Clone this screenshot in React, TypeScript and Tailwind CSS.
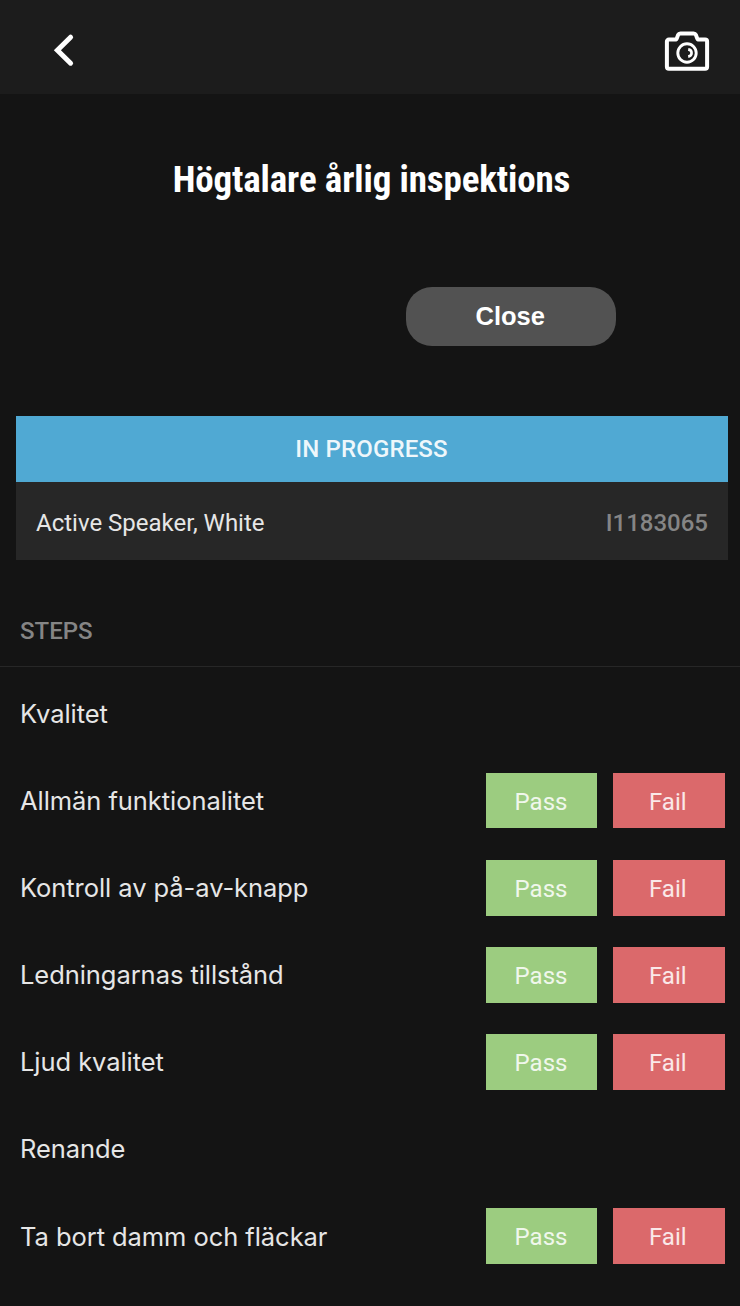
import React from 'react'

const steps = [
    { name: 'Kvalitet', heading: true },
    { name: 'Allmän funktionalitet', heading: false },
    { name: 'Kontroll av på-av-knapp', heading: false },
    { name: 'Ledningarnas tillstånd', heading: false },
    { name: 'Ljud kvalitet', heading: false },
    { name: 'Renande', heading: true },
    { name: 'Ta bort damm och fläckar', heading: false },
]

function Header() {
    return (
        <header className="flex h-[94px] items-center justify-between bg-[#1c1c1c] pt-[8px] pr-[28px] pl-[50px]">
            <button className="cursor-pointer">
                <svg width="28" height="36" viewBox="0 0 28 36" fill="none" stroke="#fff" strokeWidth="5" strokeLinecap="round" strokeLinejoin="miter">
                    <path d="M20.6 4.2 7.4 17.2 20.6 30.2" />
                </svg>
            </button>
            <button className="cursor-pointer pt-[2px]">
                <svg width="50" height="44" viewBox="0 0 50 44" fill="none" stroke="#fff" strokeWidth="4" strokeLinejoin="round">
                    <path d="M6.9 9.6H13q1.4 0 1.9-1.5l1.2-3.2q.7-1.5 2.3-1.5h13.2q1.6 0 2.3 1.5l1.2 3.2q.5 1.5 1.9 1.5h6.1a2 2 0 0 1 2 2v25.2a2 2 0 0 1-2 2H6.9a2 2 0 0 1-2-2V11.6a2 2 0 0 1 2-2Z" />
                    <circle cx="25" cy="23" r="9.2" strokeWidth="2.9" />
                    <path d="M26.2 19.4q3.4.6 3.4 3.6t-3.4 3.6" strokeWidth="2.6" />
                </svg>
            </button>
        </header>
    )
}

function StepRow({ name, heading }: { name: string; heading: boolean }) {
    return (
        <li className="flex h-[87.15px] items-center justify-between pr-[15.5px] pl-5">
            <span className="pt-px font-[Inter,sans-serif] text-[25.5px] tracking-[-0.06px]">{name}</span>
            {!heading && (
                <div className="flex gap-4 text-[24px] text-white/85">
                    <button className="h-[55.8px] w-[111px] cursor-pointer bg-[#9ccc80] pt-[2px] pr-px">Pass</button>
                    <button className="h-[55.8px] w-[111.5px] cursor-pointer bg-[#db696b] pt-[2px] pr-[2px]">Fail</button>
                </div>
            )}
        </li>
    )
}

function App() {
    return (
        <div className="h-[1306px] overflow-hidden bg-[#141414] font-[Roboto,sans-serif] text-[#e6e6e6]">
            <Header />
            <h1 className="mt-[59px] pl-[3px] text-center font-['Roboto_Condensed',Roboto,sans-serif] text-[37px] leading-[54px] font-bold tracking-[-0.13px] text-white font-stretch-condensed">
                Högtalare årlig inspektions
            </h1>
            <div className="mt-[79.5px] flex justify-end pr-[124.5px]">
                <button className="h-[59.5px] w-[209.5px] cursor-pointer rounded-[26px] bg-[#525252] pr-px font-['Liberation_Sans',sans-serif] text-[25.5px] font-bold text-white">
                    Close
                </button>
            </div>
            <section className="mt-[70px] mr-3 ml-4 text-[24px]">
                <div className="flex h-[65.5px] items-center justify-center bg-[#50a9d3] pr-px font-medium tracking-[0.15px] text-[#eef7fb]">
                    IN PROGRESS
                </div>
                <div className="flex h-[78.5px] items-center justify-between bg-[#272727] px-5 pt-[4px]">
                    <span>Active Speaker, White</span>
                    <span className="font-medium text-[#858585]">I1183065</span>
                </div>
            </section>
            <h2 className="mt-[55px] border-b border-[#272727] pb-[19px] pl-5 text-[24px] leading-[32px] font-medium text-[#858585]">
                STEPS
            </h2>
            <ul className="mt-[2.8px]">
                {steps.map((step) => (
                    <StepRow key={step.name} name={step.name} heading={step.heading} />
                ))}
            </ul>
        </div>
    )
}

export default App
